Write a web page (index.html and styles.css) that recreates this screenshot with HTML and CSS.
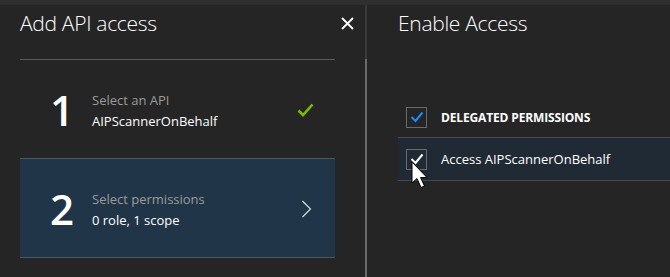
FILE: index.html
```html
<!DOCTYPE html>
<html lang="en">
<head>
    <meta charset="UTF-8">
    <title>Add API access</title>
    <link rel="stylesheet" href="styles.css">
</head>
<body>
    <div class="top-band"></div>
    <div class="blades">
        <!-- Blade di sinistra: passi -->
        <div class="blade blade-left">
            <div class="blade-header">
                <h1 class="blade-title">Add API access</h1>
                <span class="close">
                    <svg width="13" height="13" viewBox="0 0 13 13"><path d="M1 1 L12 12 M12 1 L1 12" stroke="#ffffff" stroke-width="1.8"/></svg>
                </span>
            </div>
            <div class="steps">
                <div class="step done">
                    <div class="step-num">1</div>
                    <div class="step-text">
                        <div class="step-label">Select an API</div>
                        <div class="step-value">AIPScannerOnBehalf</div>
                    </div>
                    <svg class="step-icon" width="17" height="14" viewBox="0 0 17 14"><path d="M1.5 7.5 L6 12 L15.5 1.5" fill="none" stroke="#7fba00" stroke-width="2.6"/></svg>
                </div>
                <div class="step active">
                    <div class="step-num">2</div>
                    <div class="step-text">
                        <div class="step-label">Select permissions</div>
                        <div class="step-value">0 role, 1 scope</div>
                    </div>
                    <svg class="step-icon chevron" width="11" height="18" viewBox="0 0 11 18"><path d="M1.5 1 L9.5 9 L1.5 17" fill="none" stroke="#d8dde2" stroke-width="1.2"/></svg>
                </div>
            </div>
        </div>
        <div class="scrollbar"></div>
        <!-- Blade di destra: permessi -->
        <div class="blade blade-right">
            <div class="blade-header">
                <h1 class="blade-title">Enable Access</h1>
            </div>
            <div class="perm-group">
                <div class="perm-row group-row">
                    <span class="checkbox">
                        <svg width="14" height="12" viewBox="0 0 14 12"><path d="M1.5 6 L5.5 10 L12.5 1.5" fill="none" stroke="#1a8cff" stroke-width="2"/></svg>
                    </span>
                    <span class="group-name">DELEGATED PERMISSIONS</span>
                </div>
                <div class="perm-row item-row">
                    <span class="checkbox">
                        <svg width="14" height="12" viewBox="0 0 14 12"><path d="M1.5 6 L5.5 10 L12.5 1.5" fill="none" stroke="#ffffff" stroke-width="2"/></svg>
                    </span>
                    <span class="perm-name">Access AIPScannerOnBehalf</span>
                    <svg class="cursor" width="20" height="30" viewBox="0 0 20 30"><path d="M1 1 L1 22 L6 17.5 L10 26.5 L13.5 25 L9.5 16.5 L16 16.5 Z" fill="#ffffff" stroke="#000000" stroke-width="1"/></svg>
                </div>
            </div>
        </div>
    </div>
</body>
</html>
```

FILE: styles.css
```css
/* Stile generale */
html, body {
    margin: 0;
    padding: 0;
    height: 100%;
    overflow: hidden;
    background: #252525;
    font-family: "Open Sans", "Noto Sans", Arial, sans-serif;
    color: #ffffff;
}

body {
    display: flex;
    flex-direction: column;
}

.top-band {
    height: 5px;
    background: #2f2f2f;
}

.blades {
    flex: 1;
    display: flex;
}

.blade-left {
    width: 365px;
}

.blade-right {
    flex: 1;
    padding-left: 31px;
}

.scrollbar {
    width: 2px;
    background: linear-gradient(to bottom, #3a3a3a 0, #3a3a3a 54px, #6c6c6c 54px, #6c6c6c 100%);
}

.blade-header {
    height: 54px;
    display: flex;
    align-items: flex-start;
}

.blade-left .blade-header {
    padding: 0 11px 0 20px;
}

.blade-title {
    flex: 1;
    margin: 0;
    padding-top: 3px;
    font-size: 21px;
    font-weight: 300;
    line-height: 30px;
    letter-spacing: -0.3px;
}

.close {
    margin-top: 12px;
    width: 13px;
    height: 13px;
}

.close svg {
    display: block;
}

/* Passi */
.steps {
    margin: 0 30px 0 20px;
}

.step {
    height: 95px;
    display: flex;
    align-items: center;
    border-top: 1px solid #5a5a5a;
    padding: 3px 21px 0 30px;
    box-sizing: content-box;
}

.step.active {
    background: #203547;
    border-top-color: #4d5864;
    border-bottom: 1px solid #4d5864;
}

.step-num {
    width: 42px;
    font-size: 42px;
    line-height: 42px;
    font-weight: 600;
    margin-top: -2px;
}

.step-text {
    flex: 1;
    font-size: 13px;
    line-height: 21px;
}

.step-label {
    color: #9b9b9b;
}

.step-value {
    color: #ffffff;
}

.step-icon {
    margin-bottom: 2px;
}

.chevron {
    margin-right: 2px;
}

/* Permessi */
.perm-group {
    margin-top: 42px;
}

.perm-row {
    display: flex;
    align-items: center;
    padding-left: 8px;
}

.group-row {
    height: 32px;
    border-bottom: 1px solid #4a4a4a;
    padding-bottom: 4px;
}

.item-row {
    position: relative;
    height: 42px;
    background: #1f2a35;
    border-bottom: 1px solid #4a4a4a;
}

.checkbox {
    width: 19px;
    height: 19px;
    border: 1px solid #6a6a6a;
    display: flex;
    align-items: center;
    justify-content: center;
    margin-right: 14px;
}

.group-name {
    font-size: 12px;
    font-weight: 700;
    letter-spacing: -0.15px;
}

.perm-name {
    font-size: 13px;
}

.cursor {
    position: absolute;
    left: 13px;
    top: 23px;
}
```
